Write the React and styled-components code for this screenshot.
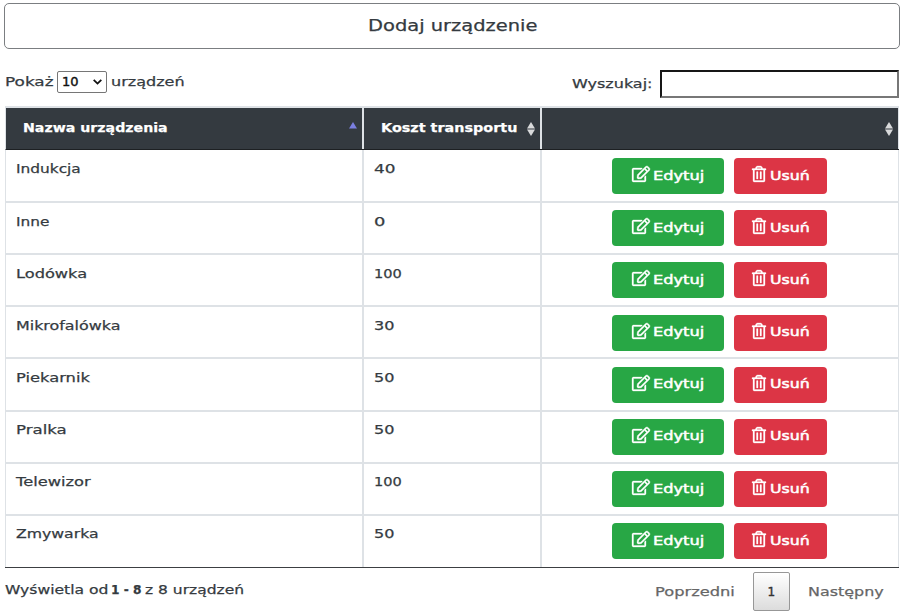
import React, { useLayoutEffect, useRef, useState } from "react";
import styled, { createGlobalStyle, css } from "styled-components";
import { FaRegEdit, FaRegTrashAlt } from "react-icons/fa";

const GlobalStyle = createGlobalStyle`
  *, *::before, *::after { box-sizing: border-box; }
  body {
    margin: 0;
    background: #fff;
    color: #343a40;
    font: 13px/20px "DejaVu Sans", Verdana, sans-serif;
    -webkit-text-stroke: 0.25px currentColor;
    overflow: hidden;
  }
  button, input, select { font: inherit; color: inherit; margin: 0; }
`;

const Page = styled.main`
  width: 902px;
  height: 612px;
  padding: 3px 2px 0 4px;
  display: flex;
  flex-direction: column;
  overflow: hidden;
`;

const TextBox = styled.span`
  display: inline-block;
  flex: none;
  width: ${(p) => p.$width}px;
  white-space: nowrap;
  text-align: left;
`;

const TextRun = styled.span`
  display: inline-block;
  transform-origin: 0 50%;
`;

/* Wide lettering: stretches a run of text to the given width. */
function Wide({ width, children }) {
  const ref = useRef(null);
  const [scale, setScale] = useState(1);
  useLayoutEffect(() => {
    setScale(width / ref.current.offsetWidth);
  }, [width, children]);
  return (
    <TextBox $width={width}>
      <TextRun ref={ref} style={{ transform: `scaleX(${scale})` }}>
        {children}
      </TextRun>
    </TextBox>
  );
}

const AddButton = styled.button`
  display: flex;
  align-items: center;
  justify-content: center;
  flex: none;
  height: 46px;
  padding: 0;
  border: 1.5px solid #7b7e81;
  border-radius: 5px;
  background: #fff;
  font-size: 16px;
`;

const Toolbar = styled.div`
  display: flex;
  justify-content: space-between;
  align-items: flex-start;
  flex: none;
  height: 57px;
  padding: 21px 1px 0 0;
`;

const LengthLabel = styled.label`
  display: flex;
  align-items: center;
  gap: 4px;
  height: 23px;
  padding-left: 1px;
`;

const LengthSelect = styled.button`
  display: flex;
  align-items: center;
  justify-content: space-between;
  width: 50px;
  height: 22px;
  padding: 0 4px;
  border: 1px solid #767676;
  border-radius: 2px;
  background: #fff;
  color: #111;
  -webkit-text-stroke: 0.4px currentColor;
`;

const SearchLabel = styled.label`
  display: flex;
  align-items: center;
  gap: 8px;
  height: 28px;
`;

const SearchInput = styled.input`
  width: 239px;
  height: 28px;
  padding: 0 4px;
  border: 2px solid;
  border-color: #171717 #777 #777 #171717;
  background: #fff;
  outline: none;
`;

const columns = css`
  display: grid;
  grid-template-columns: 358px 178px 1fr;
`;

const Table = styled.section`
  display: flex;
  flex-direction: column;
  flex: none;
  width: 894px;
  margin-left: 1px;
  border-top: 2px solid #dee2e6;
  border-bottom: 1px solid #3c3f42;
`;

const HeadRow = styled.div`
  ${columns}
  height: 42px;
  background: #343a40;
  border-bottom: 1px solid #1d2023;
  border-left: 1px solid #dee2e6;
  color: #fff;
  font-weight: 700;
`;

const HeadCell = styled.div`
  display: flex;
  align-items: center;
  justify-content: space-between;
  padding: 0 5px 1px 17px;
  border-right: ${(p) => (p.$last ? 1 : 2)}px solid #dee2e6;
`;

const SortIcon = styled.svg`
  width: 8px;
  height: 14px;
  margin-top: ${(p) => (p.$sorted ? 1 : 2)}px;
  flex: none;
`;

const Row = styled.div`
  ${columns}
  height: 52.15px;
  border-left: 1px solid #dee2e6;
  &:first-child { height: 53px; }
  &:last-child { height: 51.5px; }
  &:not(:last-child) { border-bottom: 2px solid #dee2e6; }
`;

const Cell = styled.div`
  padding: 9px 10px;
  border-right: 2px solid #dee2e6;
  ${Row}:not(:first-child) & { padding-top: 8.5px; }
`;

const Actions = styled.div`
  display: flex;
  justify-content: center;
  gap: 10px;
  padding: 8px 1px 0 0;
  border-right: 1px solid #dee2e6;
  ${Row}:not(:first-child) & { padding-top: 7.3px; }
`;

const ActionButton = styled.button`
  display: flex;
  align-items: center;
  justify-content: center;
  gap: 3px;
  width: ${(p) => (p.$danger ? 93 : 112)}px;
  height: 36px;
  padding: 0 0 1px;
  border: 0;
  border-radius: 4px;
  background: ${(p) => (p.$danger ? "#dc3545" : "#28a745")};
  color: #fff;
  -webkit-text-stroke: 0.5px currentColor;
  svg {
    flex: none;
    stroke: currentColor;
    stroke-width: 10px;
    overflow: visible;
    margin-bottom: 3px;
  }
`;

const Footer = styled.footer`
  display: flex;
  justify-content: space-between;
  flex: none;
  padding: 4px 16px 0 1px;
`;

const Info = styled.div`
  display: flex;
  gap: 3px;
  padding-top: 8px;
`;

const Pager = styled.nav`
  display: flex;
  align-items: center;
  gap: 18px;
  height: 39px;
  color: #666;
`;

const PageButton = styled.button`
  width: 37px;
  height: 39px;
  padding: 0;
  border: 1px solid #979797;
  border-radius: 2px;
  background: linear-gradient(#fff, #dcdcdc);
  color: #333;
  font-size: 12px;
  -webkit-text-stroke: 0.4px currentColor;
`;

const devices = [
  ["Indukcja", 65, "40", 22],
  ["Inne", 33, "0", 11],
  ["Lodówka", 71, "100", 28],
  ["Mikrofalówka", 104, "30", 21],
  ["Piekarnik", 74, "50", 21],
  ["Pralka", 51, "50", 21],
  ["Telewizor", 75, "100", 28],
  ["Zmywarka", 82, "50", 21],
];

function Sort({ sorted }) {
  return (
    <SortIcon $sorted={sorted} viewBox="0 0 8 14">
      <path d="M0 6.5L4 0L8 6.5Z" fill={sorted ? "#7b7fe0" : "#d9dadb"} />
      {!sorted && <path d="M0 7.5L4 14L8 7.5Z" fill="#d9dadb" />}
    </SortIcon>
  );
}

export default function App() {
  return (
    <>
      <GlobalStyle />
      <Page>
        <AddButton><Wide width={169}>Dodaj urządzenie</Wide></AddButton>
        <Toolbar>
          <LengthLabel>
            <Wide width={48}>Pokaż</Wide>
            <LengthSelect>
              <Wide width={17}>10</Wide>
              <svg width="9" height="6" viewBox="0 0 9 6" fill="none" stroke="#111" strokeWidth="1.8">
                <path d="M0.7 0.8L4.5 4.6L8.3 0.8" />
              </svg>
            </LengthSelect>
            <Wide width={74}>urządzeń</Wide>
          </LengthLabel>
          <SearchLabel>
            <Wide width={80}>Wyszukaj:</Wide>
            <SearchInput type="text" />
          </SearchLabel>
        </Toolbar>
        <Table>
          <HeadRow>
            <HeadCell><Wide width={145}>Nazwa urządzenia</Wide><Sort sorted /></HeadCell>
            <HeadCell><Wide width={136}>Koszt transportu</Wide><Sort /></HeadCell>
            <HeadCell $last><span /><Sort /></HeadCell>
          </HeadRow>
          <div>
            {devices.map(([name, nameWidth, cost, costWidth]) => (
              <Row key={name}>
                <Cell><Wide width={nameWidth}>{name}</Wide></Cell>
                <Cell><Wide width={costWidth}>{cost}</Wide></Cell>
                <Actions>
                  <ActionButton><FaRegEdit size={18} /><Wide width={51}>Edytuj</Wide></ActionButton>
                  <ActionButton $danger><FaRegTrashAlt size={16} /><Wide width={40}>Usuń</Wide></ActionButton>
                </Actions>
              </Row>
            ))}
          </div>
        </Table>
        <Footer>
          <Info>
            <Wide width={103}>Wyświetla od</Wide>
            <b><Wide width={31}>1 - 8</Wide></b>
            <Wide width={99}>z 8 urządzeń</Wide>
          </Info>
          <Pager>
            <Wide width={80}>Poprzedni</Wide>
            <PageButton><Wide width={8}>1</Wide></PageButton>
            <Wide width={76}>Następny</Wide>
          </Pager>
        </Footer>
      </Page>
    </>
  );
}
